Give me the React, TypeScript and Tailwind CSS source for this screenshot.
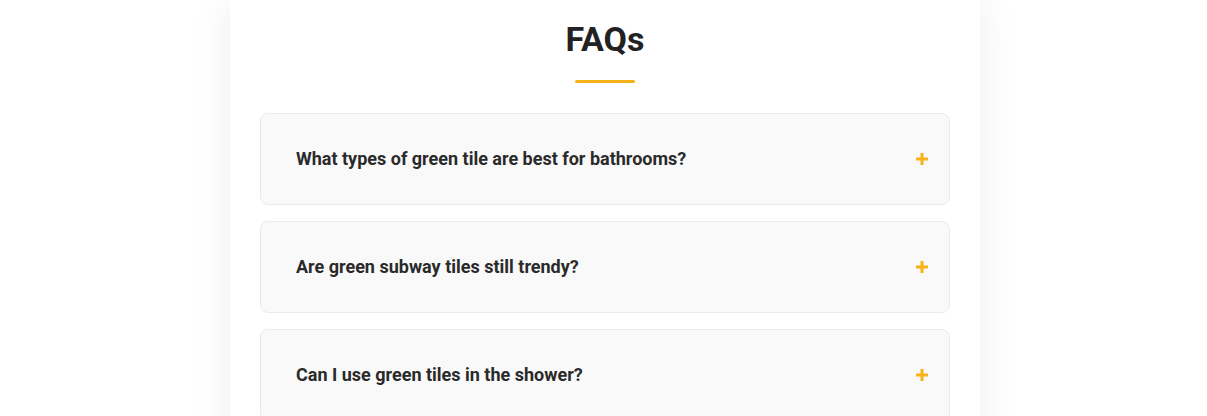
const faqs = [
  'What types of green tile are best for bathrooms?',
  'Are green subway tiles still trendy?',
  'Can I use green tiles in the shower?',
];

function PlusIcon() {
  return (
    <svg width="12" height="12" viewBox="0 0 12 12" className="shrink-0">
      <rect x="4.5" y="0" width="3" height="12" fill="#f7b219" />
      <rect x="0" y="4.5" width="12" height="3" fill="#f7b219" />
    </svg>
  );
}

export default function App() {
  return (
    <div className="min-h-screen bg-white pl-[3px] font-['Roboto',sans-serif]">
      <div className="mx-auto w-[750px] bg-white px-[30px] pt-[19px] pb-10 shadow-[0_0_40px_rgba(0,0,0,0.07)]">
        <h2 className="text-center text-[34px] leading-[40px] font-bold text-[#222]">FAQs</h2>
        <div className="mx-auto mt-[21px] h-[3px] w-[60px] rounded-full bg-[#f7b219]" />
        <div className="mt-[30px] flex flex-col gap-4">
          {faqs.map((q) => (
            <div
              key={q}
              className="flex items-center justify-between rounded-lg border border-[#ebebeb] bg-[#f9f9f9] py-[34px] pr-[21px] pl-[35px]"
            >
              <span className="text-[18px] leading-[22px] font-bold text-[#2a2a2a]">{q}</span>
              <PlusIcon />
            </div>
          ))}
        </div>
      </div>
    </div>
  );
}
